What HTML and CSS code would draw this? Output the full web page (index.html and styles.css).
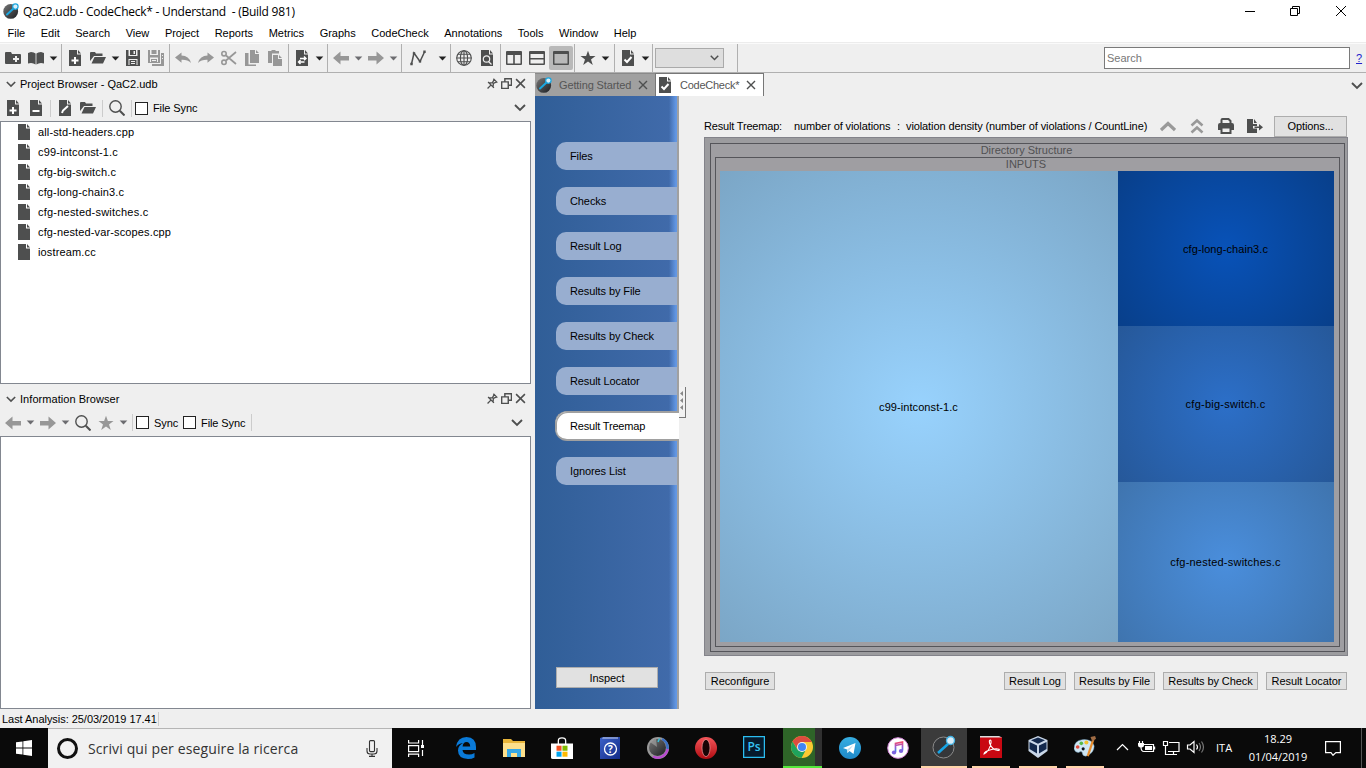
FILE: index.html
```html
<!DOCTYPE html>
<html lang="en">
<head>
<meta charset="utf-8">
<title>QaC2.udb - CodeCheck* - Understand</title>
<link rel="stylesheet" href="styles.css">
</head>
<body>
<svg class="defs" width="0" height="0">
  <defs>
    <linearGradient id="ball" x1="0" y1="0" x2="1" y2="1"><stop offset="0" stop-color="#777"/><stop offset="1" stop-color="#1c1e22"/></linearGradient>
    <linearGradient id="note" x1="0" y1="0" x2="0" y2="1"><stop offset="0" stop-color="#f0486c"/><stop offset=".5" stop-color="#9a5bd6"/><stop offset="1" stop-color="#2c8ce8"/></linearGradient>
    <linearGradient id="red" x1="0" y1="0" x2="0" y2="1"><stop offset="0" stop-color="#f5565a"/><stop offset="1" stop-color="#b00c12"/></linearGradient>
    <linearGradient id="book" x1="0" y1="0" x2="1" y2="1"><stop offset="0" stop-color="#3c62c8"/><stop offset="1" stop-color="#122a88"/></linearGradient>
    <linearGradient id="tele" x1="0" y1="0" x2="0" y2="1"><stop offset="0" stop-color="#37aee2"/><stop offset="1" stop-color="#1e88c8"/></linearGradient>
  </defs>
  <symbol id="i-app" viewBox="0 0 16 16"><circle cx="7.7" cy="8.4" r="7.4" fill="url(#ball)"/><path d="M4 11.5 11 5" stroke="#1ba7e0" stroke-width="2" stroke-linecap="round"/><circle cx="12.4" cy="3.6" r="2.7" fill="#d5eefa" stroke="#1ba7e0" stroke-width="1.2"/></symbol>
  <symbol id="i-folderplus" viewBox="0 0 16 16"><path fill="currentColor" fill-rule="evenodd" d="M0 3q0-1 1-1h5l1 2h8q1 0 1 1v8q0 1-1 1H1q-1 0-1-1zM10 6v2H8v2h2v2h2v-2h2V8h-2V6z"/></symbol>
  <symbol id="i-book" viewBox="0 0 16 16"><path fill="currentColor" d="M0 3 3 2q3 0 4.600 1.500V14.500Q5.500 13 3 13L0 13.500zM16 3l-3-1q-3 0-4.600 1.500V14.500q2-1.500 4.600-1.500l3 .5z"/></symbol>
  <symbol id="i-caret" viewBox="0 0 9 5"><path fill="currentColor" d="M.7.500h7.600L4.500 4.500z"/></symbol>
  <symbol id="i-doc" viewBox="0 0 16 16"><path fill="currentColor" d="M2 0h8v4.500h4V16H2zM11 0l3 3.500h-3z"/></symbol>
  <symbol id="i-docplus" viewBox="0 0 16 16"><use href="#i-doc"/><path stroke="#fff" stroke-width="2" d="M8 7v7M4.500 10.500h7"/></symbol>
  <symbol id="i-docminus" viewBox="0 0 16 16"><use href="#i-doc"/><path stroke="#fff" stroke-width="2" d="M4.500 11h7"/></symbol>
  <symbol id="i-docpen" viewBox="0 0 16 16"><use href="#i-doc"/><path stroke="#fff" stroke-width="2" d="m5 13 1-2.500 5-4.500"/></symbol>
  <symbol id="i-docswap" viewBox="0 0 16 16"><use href="#i-doc"/><path stroke="#fff" stroke-width="1.400" fill="none" d="M6 8.500h5.500M5 12h5.500M10 6.500l2 2-2 1.600M6.500 10 4.500 12l2 2"/></symbol>
  <symbol id="i-doccheck" viewBox="0 0 16 16"><use href="#i-doc"/><path stroke="#fff" stroke-width="2" fill="none" d="m4.500 9.500 2.500 2.500 4.500-5"/></symbol>
  <symbol id="i-docfind" viewBox="0 0 16 16"><use href="#i-doc"/><path stroke="#eee" stroke-width="1.200" fill="none" d="m9.500 11.500 3 3"/><circle cx="7.500" cy="9" r="3.200" fill="none" stroke="#eee" stroke-width="1.200"/></symbol>
  <symbol id="i-open" viewBox="0 0 16 16"><path fill="currentColor" d="M0 11V3q0-1 1-1h4l1 1.500h6.500V6H4zM4.500 7H16l-3 6.500H1.500z"/></symbol>
  <symbol id="i-save" viewBox="0 0 16 16"><path fill="currentColor" fill-rule="evenodd" d="M1 0h2.500v6h9V0H15v16H1zM5 0h6v5H5zM3.500 9v6h1v-5h7v5h1V9zM6 11h4v1H6zm0 2h4v1H6zM8.500 1v3H10V1z"/></symbol>
  <symbol id="i-saveall" viewBox="0 0 16 16"><path fill="currentColor" fill-rule="evenodd" d="M0 0h2v5h8V0h2v13H0zM3.500 0h5v4h-5zM2 7.500V12h1V9h6v3h1V7.500zM4 10h4v1H4z"/><path fill="currentColor" d="M13 3h3v13H4v-2h9zM14 5v1h1V5zM14 8v1h1V8z"/></symbol>
  <symbol id="i-undo" viewBox="0 0 16 16"><path fill="currentColor" d="M0 7.500 6.500 2.500v3Q14 5.500 16 13q-3.500-3.500-9.500-3.200v3z"/></symbol>
  <symbol id="i-redo" viewBox="0 0 16 16"><path fill="currentColor" d="M16 7.500 9.500 2.500v3Q2 5.500 0 13q3.500-3.500 9.500-3.200v3z"/></symbol>
  <symbol id="i-cut" viewBox="0 0 16 16"><path stroke="currentColor" stroke-width="1.700" fill="none" d="M5 5.500 15 14M5 10.500 15 2"/><circle cx="3" cy="3.700" r="2.200" fill="none" stroke="currentColor" stroke-width="1.600"/><circle cx="3" cy="12.300" r="2.200" fill="none" stroke="currentColor" stroke-width="1.600"/></symbol>
  <symbol id="i-copy" viewBox="0 0 16 16"><path fill="currentColor" d="M6 0h5v4h4v9H6zM12 0l3 3h-3zM1 3h3.500v11.500H12V16H1z"/></symbol>
  <symbol id="i-paste" viewBox="0 0 16 16"><path fill="currentColor" d="M1 1h3l1-1h3l1 1h3v2.500H5V13H1zM6 5h5v4h4v7H6zM12 5l3 3h-3z"/></symbol>
  <symbol id="i-left" viewBox="0 0 16 16"><path fill="currentColor" d="M0 8 7.500 1.500V6H16v4.500H7.500v4z"/></symbol>
  <symbol id="i-right" viewBox="0 0 16 16"><path fill="currentColor" d="M16 8 8.500 1.500V6H0v4.500h8.500v4z"/></symbol>
  <symbol id="i-graph" viewBox="0 0 16 16"><path stroke="currentColor" stroke-width="1.500" fill="none" d="M1.500 14 4 3l6 8.500L14.500 2"/><path fill="currentColor" d="M.3 12.700h2.400v2.600H.3zM2.800 2.200h2.400v2.400H2.800zM8.800 10.200h2.400v2.400H8.800zM13.300.500h2.400v2.400h-2.400z"/></symbol>
  <symbol id="i-globe" viewBox="0 0 16 16"><g fill="none" stroke="currentColor" stroke-width="1.100"><circle cx="8" cy="8" r="7.300"/><ellipse cx="8" cy="8" rx="3.600" ry="7.300"/><path d="M8 .5v15M.5 8h15M1.800 4.200h12.400M1.800 11.800h12.400"/></g></symbol>
  <symbol id="i-cols" viewBox="0 0 16 16"><path fill="currentColor" fill-rule="evenodd" d="M1 1h14q1 0 1 1v12q0 1-1 1H1q-1 0-1-1V2q0-1 1-1zM1.500 5v8.500h5.700V5zM8.800 5v8.500h5.700V5z"/></symbol>
  <symbol id="i-rows" viewBox="0 0 16 16"><path fill="currentColor" fill-rule="evenodd" d="M1 1h14q1 0 1 1v12q0 1-1 1H1q-1 0-1-1V2q0-1 1-1zM1.500 4v4h13V4zM1.500 9.500v4h13v-4z"/></symbol>
  <symbol id="i-single" viewBox="0 0 16 16"><path fill="currentColor" fill-rule="evenodd" d="M1 1h14q1 0 1 1v12q0 1-1 1H1q-1 0-1-1V2q0-1 1-1zM1.500 4v9.500h13V4z"/></symbol>
  <symbol id="i-star" viewBox="0 0 16 16"><path fill="currentColor" d="m8 .8 1.900 5.300h5.600l-4.500 3.300 1.800 5.500L8 11.500l-4.800 3.400L5 9.400.5 6.100h5.600z"/></symbol>
  <symbol id="i-find" viewBox="0 0 16 16"><circle cx="6.500" cy="6.500" r="5.700" fill="none" stroke="currentColor" stroke-width="1.400"/><path d="m10.800 10.800 4.700 4.700" stroke="currentColor" stroke-width="2"/></symbol>
  <symbol id="i-chev" viewBox="0 0 12 8"><path d="m1 1 5 5 5-5" fill="none" stroke="currentColor" stroke-width="1.900"/></symbol>
  <symbol id="i-pin" viewBox="0 0 10 10"><path d="M.5 9.500 3.300 6.700M1 3.700 6.300 9M1.800 4.500 5 4.200 6.500 1.300M5.500 8.200 5.800 5 8.700 3.500M5.800.6l3.600 3.600" fill="none" stroke="currentColor" stroke-width="1.200"/></symbol>
  <symbol id="i-float" viewBox="0 0 10 10"><path d="M3.500 3V.600h6v6H7M.6 3.500h6v6h-6z" fill="none" stroke="currentColor" stroke-width="1.300"/></symbol>
  <symbol id="i-x" viewBox="0 0 10 10"><path d="m1 1 8 8M9 1 1 9" fill="none" stroke="currentColor" stroke-width="1.400"/></symbol>
  <symbol id="i-print" viewBox="0 0 16 16"><path fill="none" stroke="currentColor" stroke-width="2" d="M3.500 6V2q0-1 1-1h6l2 2v3M3.500 9.500h9V15h-9z"/><path fill="currentColor" d="M2 5h12q2 0 2 2v5h-3.500V9h-9v3H0V7q0-2 2-2z"/></symbol>
  <symbol id="i-export" viewBox="0 0 16 16"><path fill="currentColor" d="M0 1h6v5h4v2H6v2.500h4V15H0zM7 1l3 4H7zM7.500 8.500H12V6l4 3.300-4 3.200V10H7.500z"/></symbol>
</svg>

<header class="titlebar">
  <svg class="app-icon"><use href="#i-app"/></svg>
  <span class="title">QaC2.udb - CodeCheck* - Understand&nbsp; - (Build 981)</span>
  <svg class="winbtns" viewBox="0 0 104 12"><g fill="none" stroke="#000"><path d="M1 6.500h10M46.500 3.500h7v7h-7zM48.500 3.500v-2h7v7h-2M92 1l10 10M102 1 92 11"/></g></svg>
</header>
<nav class="menubar"><span>File</span><span>Edit</span><span>Search</span><span>View</span><span>Project</span><span>Reports</span><span>Metrics</span><span>Graphs</span><span>CodeCheck</span><span>Annotations</span><span>Tools</span><span>Window</span><span>Help</span></nav>

<div class="toolbar">
  <div class="group g1"><svg><use href="#i-folderplus"/></svg><svg><use href="#i-book"/></svg><svg class="caret"><use href="#i-caret"/></svg></div>
  <div class="group g2"><svg><use href="#i-docplus"/></svg><svg><use href="#i-open"/></svg><svg class="caret"><use href="#i-caret"/></svg><svg><use href="#i-save"/></svg><svg class="off"><use href="#i-saveall"/></svg></div>
  <div class="group g3 off"><svg><use href="#i-undo"/></svg><svg><use href="#i-redo"/></svg><svg><use href="#i-cut"/></svg><svg><use href="#i-copy"/></svg><svg><use href="#i-paste"/></svg></div>
  <div class="group g4"><svg><use href="#i-docswap"/></svg><svg class="caret"><use href="#i-caret"/></svg></div>
  <div class="group g5"><svg class="off"><use href="#i-left"/></svg><svg class="caret dim"><use href="#i-caret"/></svg><svg class="off"><use href="#i-right"/></svg><svg class="caret dim"><use href="#i-caret"/></svg></div>
  <div class="group g6"><svg><use href="#i-graph"/></svg><svg class="caret"><use href="#i-caret"/></svg></div>
  <div class="group g7"><svg><use href="#i-globe"/></svg><svg><use href="#i-docfind"/></svg></div>
  <div class="group g8"><svg><use href="#i-cols"/></svg><svg><use href="#i-rows"/></svg><span class="pressed"><svg><use href="#i-single"/></svg></span></div>
  <div class="group g9"><svg><use href="#i-star"/></svg><svg class="caret"><use href="#i-caret"/></svg></div>
  <div class="group g10"><svg><use href="#i-doccheck"/></svg><svg class="caret"><use href="#i-caret"/></svg></div>
  <div class="group g11"><span class="combo"><svg><use href="#i-chev"/></svg></span></div>
  <div class="search">Search</div><span class="help">?</span>
</div>

<main class="work">
  <aside class="docks">
    <section class="dock project">
      <div class="dock-title"><svg class="fold"><use href="#i-chev"/></svg><span>Project Browser - QaC2.udb</span><svg class="tb first"><use href="#i-pin"/></svg><svg class="tb"><use href="#i-float"/></svg><svg class="tb"><use href="#i-x"/></svg></div>
      <div class="dock-tools"><svg><use href="#i-docplus"/></svg><svg><use href="#i-docminus"/></svg><i></i><svg><use href="#i-docpen"/></svg><svg><use href="#i-open"/></svg><i></i><svg><use href="#i-find"/></svg><i></i><b class="box"></b><span>File Sync</span><svg class="more"><use href="#i-chev"/></svg></div>
      <ul class="pane files">
        <li><svg><use href="#i-doc"/></svg>all-std-headers.cpp</li>
        <li><svg><use href="#i-doc"/></svg>c99-intconst-1.c</li>
        <li><svg><use href="#i-doc"/></svg>cfg-big-switch.c</li>
        <li><svg><use href="#i-doc"/></svg>cfg-long-chain3.c</li>
        <li class="wide"><svg><use href="#i-doc"/></svg>cfg-nested-switches.c</li>
        <li><svg><use href="#i-doc"/></svg>cfg-nested-var-scopes.cpp</li>
        <li><svg><use href="#i-doc"/></svg>iostream.cc</li>
      </ul>
    </section>
    <section class="dock info">
      <div class="dock-title"><svg class="fold"><use href="#i-chev"/></svg><span>Information Browser</span><svg class="tb first"><use href="#i-pin"/></svg><svg class="tb"><use href="#i-float"/></svg><svg class="tb"><use href="#i-x"/></svg></div>
      <div class="dock-tools info-tools"><svg class="off"><use href="#i-left"/></svg><svg class="caret dim"><use href="#i-caret"/></svg><svg class="off"><use href="#i-right"/></svg><svg class="caret dim"><use href="#i-caret"/></svg><svg><use href="#i-find"/></svg><svg class="off"><use href="#i-star"/></svg><svg class="caret dim"><use href="#i-caret"/></svg><i></i><b class="box"></b><span>Sync</span><b class="box second"></b><span>File Sync</span><i class="end"></i><svg class="more"><use href="#i-chev"/></svg></div>
      <div class="pane"></div>
    </section>
  </aside>

  <section class="editor">
    <div class="tabs">
      <div class="tab idle"><svg class="ic"><use href="#i-app"/></svg><span>Getting Started</span><svg class="x"><use href="#i-x"/></svg></div>
      <div class="tab current"><svg class="ic"><use href="#i-doccheck"/></svg><span>CodeCheck*</span><svg class="x"><use href="#i-x"/></svg></div>
      <svg class="more"><use href="#i-chev"/></svg>
    </div>
    <div class="content">
      <nav class="side">
        <a>Files</a><a>Checks</a><a>Result Log</a><a>Results by File</a><a>Results by Check</a><a>Result Locator</a><a class="active">Result Treemap</a><a>Ignores List</a>
        <button class="inspect">Inspect</button>
      </nav>
      <svg class="grip" viewBox="0 0 8 31"><path fill="#f2f2f2" d="M0 0h6v30H0z"/><path stroke="#777" d="M0 30.500h7M6.500 0v31" fill="none"/><path fill="#888" d="M4 4v5L1 6.500zM4 11v5l-3-2.500zM4 18v5l-3-2.500z"/></svg>
      <div class="report">
        <div class="report-head">
          <span class="h1">Result Treemap:</span><span class="h2">number of violations</span><span class="h3">:</span><span class="h4">violation density (number of violations / CountLine)</span>
          <svg class="up" viewBox="0 0 16 16"><path d="m1 12 7-6.500 7 6.500" fill="none" stroke="#999" stroke-width="3.200"/></svg>
          <svg class="upup" viewBox="0 0 16 16"><path d="m2.500 7.500 5.500-5 5.500 5M2.500 14.500l5.500-5 5.500 5" fill="none" stroke="#999" stroke-width="2.600"/></svg>
          <svg><use href="#i-print"/></svg><svg class="exp"><use href="#i-export"/></svg>
          <button class="options">Options...</button>
        </div>
        <div class="map">
          <div class="level dir"><div class="cap">Directory Structure</div>
            <div class="level inputs"><div class="cap">INPUTS</div>
              <div class="cells"><div class="cell c1">c99-intconst-1.c</div><div class="cell c2">cfg-long-chain3.c</div><div class="cell c3">cfg-big-switch.c</div><div class="cell c4 wide">cfg-nested-switches.c</div></div>
            </div>
          </div>
        </div>
        <div class="report-foot"><button class="b1">Reconfigure</button><button class="b2">Result Log</button><button class="b3">Results by File</button><button class="b4">Results by Check</button><button class="b5">Result Locator</button></div>
      </div>
    </div>
  </section>
</main>
<footer class="status"><span>Last Analysis: 25/03/2019 17.41</span></footer>

<div class="taskbar">
  <div class="start"><svg viewBox="0 0 16 16"><path fill="#fff" d="M0 2.300 6.500 1.400v6.200H0zM7.300 1.200 16 0v7.600H7.300zM0 8.400h6.500v6.200L0 13.700zM7.300 8.400H16V16l-8.700-1.200z"/></svg></div>
  <div class="cortana"><span class="ring"></span><span class="ask">Scrivi qui per eseguire la ricerca</span><svg class="mic" viewBox="0 0 12 17"><g fill="none" stroke="#333" stroke-width="1.100"><rect x="3.500" y=".6" width="5" height="11" rx="1"/><path d="M1 8v3q0 3 3 3h4q3 0 3-3V8M6 14v2.500M3 16.400h6"/></g></svg></div>
  <div class="app view"><svg viewBox="0 0 22 22"><path fill="none" stroke="#fff" stroke-width="1.200" d="M3.600 3v3h10V3M3.600 8.600h10v6h-10zM3.600 20v-2.800h10V20M17.500 3v5M17.500 13v6"/><path fill="#fff" d="M16 8h3v3h-3z"/></svg></div>
  <div class="app"><svg viewBox="0 0 22 22"><path fill="#0a7ad8" d="M1 10Q2.500 0 11.500 0 21 .5 21 10v3H7.500q.5 4.500 6.500 4.500 3 0 5.500-1.500v4.500Q17 22 13 22 3 21.500 3 13.500 3 8.500 8 6 3.500 6.500 1 10zM7.600 9.500h7.600Q15 5 11.500 5 8 5 7.600 9.500z"/></svg></div>
  <div class="app"><svg viewBox="0 0 22 22"><path fill="#e8b53a" d="M0 2h8l2 2h12v15H0z"/><path fill="#fde08c" d="M0 6h22v14H0z"/><path fill="#35a8e8" d="M4 12h14v8h-4v-4H8v4H4z"/></svg></div>
  <div class="app"><svg viewBox="0 0 24 24"><path d="M8 8V4q0-3 4-3t4 3v4" fill="none" stroke="#fff" stroke-width="1.400"/><path fill="#fff" d="M0 7h24v17H2q-2 0-2-2z"/><path fill="#f25022" d="M6 9.500h5.500V15H6z"/><path fill="#7fba00" d="M12.500 9.500H18V15h-5.500z"/><path fill="#00a4ef" d="M6 16h5.500v5.500H6z"/><path fill="#ffb900" d="M12.500 16H18v5.500h-5.500z"/></svg></div>
  <div class="app"><svg viewBox="0 0 22 22"><path fill="url(#book)" d="M1 1 4 0h17v22H1z"/><path fill="#c9d4ee" d="m3 1.500 1-1h15v1z"/><circle cx="11.500" cy="12" r="6" fill="none" stroke="#fff" stroke-width="1.300"/><text x="11.500" y="15.600" class="q">?</text></svg></div>
  <div class="app"><svg viewBox="0 0 22 22"><circle cx="11" cy="11" r="11" fill="#999"/><path d="M15 2a10 10 0 0 1 5.500 10" stroke="#3a6fc4" stroke-width="2.500" fill="none"/><path d="M20.500 12A10 10 0 0 1 6 19.500" stroke="#b94bd0" stroke-width="2.500" fill="none"/><circle cx="10.500" cy="10.500" r="8.500" fill="url(#ball)"/><path d="M10 10 3 5a9 9 0 0 1 6-3z" fill="#aaa" opacity=".6"/><path d="m11 5 1.500-3.500" stroke="#32c4dc" stroke-width="1.500"/></svg></div>
  <div class="app"><svg viewBox="0 0 22 22"><circle cx="11" cy="11" r="11" fill="url(#red)"/><ellipse cx="11" cy="11" rx="4" ry="8.600" fill="#190405" stroke="#ef9a9a" stroke-width=".7"/></svg></div>
  <div class="app ps-app"><svg viewBox="0 0 22 22"><rect x=".6" y=".6" width="20.800" height="20.800" fill="#061a2c" stroke="#2bbdf0" stroke-width="1.300"/><text x="11" y="15.300" class="ps">Ps</text></svg></div>
  <div class="app chrome"><span><svg viewBox="0 0 22 22"><circle cx="11" cy="11" r="11" fill="#fbc932"/><path fill="#dc4c3f" d="M1.500 5.500A11 11 0 0 1 20.500 5.500L21 6H11l-4.500 7z"/><path fill="#1fa25c" d="M1.500 5.500 6.500 13.500l8 1L10.500 22A11 11 0 0 1 1.500 5.500z"/><circle cx="11" cy="11" r="5" fill="#f1f1f1"/><circle cx="11" cy="11" r="4" fill="#4285f4"/></svg></span></div>
  <div class="app"><svg viewBox="0 0 22 22"><circle cx="11" cy="11" r="11" fill="url(#tele)"/><path fill="#fff" d="m4 11 12.500-5-2 11-4-3-2 2-.5-3.500z"/><path fill="#bcdff2" d="m8 12.500 6.500-4.500-4.500 5.500-1.500 2.500z"/></svg></div>
  <div class="app"><svg viewBox="0 0 22 22"><circle cx="11" cy="11" r="10.300" fill="#fff" stroke="#d78bdc" stroke-width="1"/><path d="M8.500 15V6.500l7-1.500v8.500M8.500 8.500l7-1.500" fill="none" stroke="url(#note)" stroke-width="1.700"/><ellipse cx="7" cy="15.500" rx="2.200" ry="1.900" fill="#7c63e0"/><ellipse cx="14" cy="14" rx="2.200" ry="1.900" fill="#7c63e0"/></svg></div>
  <div class="app und"><svg viewBox="0 0 24 24"><circle cx="11.500" cy="12.500" r="10.500" fill="#35373a" stroke="#8a8a8a"/><path d="m6 18 10-9" stroke="#16a5e6" stroke-width="2.600"/><circle cx="18.500" cy="5.500" r="4" fill="#d7ecf8" stroke="#3fb2e4" stroke-width="1.300"/></svg></div>
  <div class="app run"><span><svg viewBox="0 0 22 22"><path fill="#c90812" d="M0 1h22v21H0z"/><path fill="#ddd" d="M0 0h19l3 1.500H0z"/><path d="M4 18q5-2 7-11 .3-3-.8-3-1.300.2-.6 3 2 6.500 8.400 7.500 2-.2 1-1.300-4-1.700-13 2.300Q4 17 4 18z" fill="none" stroke="#fff" stroke-width="1.100"/></svg></span></div>
  <div class="app run"><span><svg viewBox="0 0 22 22"><path fill="#c9d7e8" d="m11 0 9.500 4v11L11 22l-9.500-7V4z"/><path fill="#13294d" d="m11 1.500 7 2.700-7 3.500-7-3.500zM2.500 6l7.500 3.500v8L2.500 13zM19.500 6 12 9.500v8l7.500-4.500z"/></svg></span></div>
  <div class="app run"><span><svg viewBox="0 0 24 24"><path fill="#cfe6f4" stroke="#7aa9c8" stroke-width=".5" d="M0 14Q0 5 9 4q11-1 13 7 0 8-9 11-4 0-4-4-1-2-4 0-4 0-5-4z"/><circle cx="4" cy="12" r="2" fill="#e04b3c"/><circle cx="8" cy="8" r="2" fill="#55b848"/><circle cx="13.500" cy="7" r="2.200" fill="#f2c12e"/><circle cx="10" cy="14" r="1.700" fill="#10131a"/><path d="m15 22 6-18" stroke="#e88d2c" stroke-width="2.400"/><path fill="#a06c44" d="m18 1 5-1 1 3-4 3z"/></svg></span></div>
  <svg class="tray" viewBox="0 0 90 20"><g fill="none" stroke="#fff" stroke-width="1.200"><path d="m1 13 5.500-5.500L12 13M28 7.500h9.500v7H27M23.500 4v2M26.500 4v2M25 10q0 4.500 3 4.500M47.500 4.500h4v4h-4zM53 5.500h10v9H52M57.500 14.500V17M53 17.500h8M49.500 9v8.500H53M71.500 8v4h2.500l4 3.500v-11L74 8zM80.500 7.500q2 2.500 0 5"/><path d="M83 6q3 4 0 8M85.500 4.500q4 5.500 0 11" stroke="#777"/></g><path fill="#fff" d="M29 9h7v4h-7zM22 6h6v2q0 2.500-3 2.500T22 8zM38 9.500h1.200v3H38z"/></svg>
  <span class="lang">ITA</span>
  <div class="clock"><span>18.29</span><span>01/04/2019</span></div>
  <svg class="notif" viewBox="0 0 16 16"><path d="M.6 1.600h14.800v11h-4.500L8 15.300l-2-2.700H.6z" fill="none" stroke="#fff" stroke-width="1.200"/></svg>
  <span class="peek"></span>
</div>
</body>
</html>
```
FILE: styles.css
```css
* { box-sizing: border-box; }
body { margin: 0; width: 1366px; height: 768px; overflow: hidden; display: flex; flex-direction: column; background: #efefef; color: #000; font: 11px/14px "Liberation Sans", Arial, sans-serif; }
svg { display: block; flex: none; width: 16px; height: 16px; fill: none; color: #4e4f4f; }
.defs { position: absolute; width: 0; height: 0; }
.off, .off svg { color: #979797; }
button { font: inherit; letter-spacing: inherit; padding: 0; border: 1px solid #adadad; background: #e1e1e1; color: #000; }

.titlebar { height: 24px; background: #fff; display: flex; align-items: center; padding-left: 3px; }
.app-icon { width: 16px; height: 16px; margin-top: -2px; }
.title { font: 12px/24px "Open Sans", "Noto Sans", sans-serif; letter-spacing: -.25px; margin-left: 4px; white-space: nowrap; }
.winbtns { width: 104px; height: 12px; margin: -2px 18px 0 auto; }
.menubar { height: 20px; background: #fff; border-bottom: 1px solid #fafafa; box-shadow: inset 0 -1px #ececec; display: flex; gap: 15.6px; padding: 2px 0 0 7.500px; letter-spacing: -.01px; }

.toolbar { height: 29px; display: flex; border-bottom: 1px solid #b0b0b0; flex: none; }
.group { display: flex; align-items: center; gap: 7px; padding-left: 5px; border-right: 1px solid #b0b0b0; }
.caret { width: 9px; height: 5px; margin: 0 -2px; color: #222; }
.dim { color: #6c6c70; }
.g1 { width: 62px; } .g2 { width: 108px; } .g3 { width: 119px; } .g4 { width: 39px; } .g5 { width: 74px; }
.g6 { width: 49px; padding-left: 8px; } .g6 .caret { margin-left: 5px; }
.g7 { width: 50px; } .g8 { width: 74px; } .g9 { width: 40px; } .g10 { width: 38px; } .g11 { width: 85px; padding-left: 2px; }
.pressed { width: 24px; height: 24px; background: #b9b9b9; border-radius: 2px; padding: 4px; margin-left: -3px; }
.combo { width: 69px; height: 20px; border: 1px solid #aaa; background: #dedede; display: flex; align-items: center; justify-content: flex-end; padding-right: 4px; }
.combo svg { width: 9px; height: 6px; }
.search { width: 246px; height: 22px; margin: 3px 0 0 366px; border: 1px solid #7a7a7a; background: #fff; color: #777; padding: 3px 2px; }
.help { color: #2222cc; text-decoration: underline; margin: 7px 0 0 6px; }

.work { height: 636px; display: flex; flex: none; }
.docks { width: 535px; }
.dock-title { height: 22px; display: flex; align-items: center; padding: 0 5px 0 6px; }
.dock-title .fold { width: 10px; height: 7px; margin-right: 4px; }
.tb { width: 11px; height: 11px; margin-left: 3px; margin-top: -1px; }
.tb.first { margin-left: auto; }
.docks .dock-title { width: 531px; }
.dock-tools { height: 26px; width: 531px; display: flex; align-items: center; padding-left: 5px; gap: 7px; }
.dock-tools i { width: 1px; height: 17px; background: #ccc; margin: 0 -1px; }
.box { width: 13px; height: 13px; border: 1px solid #222; background: #fff; }
.project .box { margin-left: -3px; }
.dock-tools span { margin-left: -2px; letter-spacing: -.1px; }
.more { width: 12px; height: 8px; }
.dock-tools .more { margin: 0 5px 0 auto; }
.pane { margin: 0; width: 531px; border: 1px solid #828790; background: #fff; }
.files { list-style: none; padding: 0 0 0 15px; height: 263px; letter-spacing: .14px; }
.files li { height: 20px; display: flex; align-items: center; gap: 6px; }
.wide { letter-spacing: .22px; }
.info { padding-top: 4px; }
.info .dock-title { height: 22px; letter-spacing: .05px; }
.info .dock-tools { height: 26px; padding-bottom: 1px; }
.info .pane { height: 273px; }
.info-tools .box { margin-left: -3px; }
.info-tools .box.second { margin-left: -2px; }
.info-tools .end { margin-left: -1px; }
.info-tools .more { margin-right: 8px; }
.project { height: 311px; }

.editor { width: 831px; display: flex; flex-direction: column; }
.tabs { height: 23px; display: flex; align-items: center; flex: none; }
.tab { height: 23px; display: flex; align-items: center; border-top: 1px solid #8a8a8a; color: #555; }
.idle { width: 120px; background: #a0a0a0; padding-left: 1px; letter-spacing: -.12px; }
.idle span, .current span { margin: 0 7px; }
.current { width: 109px; background: #fff; border: 1px solid #777; border-bottom: 0; padding-left: 1px; letter-spacing: -.25px; }
.tab .x { width: 10px; height: 10px; }
.tabs .more { margin: 3px 3px 0 auto; }
.content { flex: 1; display: flex; }
.side { width: 144px; border-right: 2px solid #a0a0a0; background: linear-gradient(90deg, transparent 134px, #6297e4 141px), linear-gradient(90deg, #305e97, #416bab); padding: 46px 0 0 21px; display: flex; flex-direction: column; gap: 17px; letter-spacing: -.1px; }
.side a { height: 28px; flex: none; line-height: 28px; padding-left: 14px; background: #98aed0; border-radius: 10px 0 0 10px; }
.side .active { height: 30px; line-height: 28px; margin: -1px -2px -1px -1px; background: #fff; border: 1px solid #a0a0a0; border-width: 1px 0 2px 1px; box-shadow: inset 1px 1px #a0a0a0; border-radius: 12px 0 0 12px; letter-spacing: -.18px; }
.inspect { width: 102px; height: 21px; margin: auto 0 21px; flex: none; }
.grip { width: 8px; height: 31px; margin: 291px 0 0 0; }
.report { width: 661px; margin-left: 17px; display: flex; flex-direction: column; }
.report-head { height: 41px; padding-top: 19px; display: flex; align-items: center; white-space: nowrap; letter-spacing: -.1px; }
.h1 { width: 78px; letter-spacing: -.18px; } .h2 { margin-left: 12px; width: 97px; } .h3 { margin-left: 6px; width: 3px; } .h4 { margin-left: 6px; width: 243px; }
.up { margin-left: 11px; } .upup { margin: 0 13px; } .exp { margin-left: 13px; }
.options { width: 73px; height: 21px; margin-left: auto; margin-right: 18px; }
.map { width: 644px; height: 519px; background: #9c9c9f; border: 1px solid #83838a; padding: 5px 3px 3px 5px; display: flex; flex: none; }
.level { flex: 1; border: 1px solid #55555a; background: #9f9ea2; display: flex; flex-direction: column; }
.dir { padding: 0 4px 4px 4px; }
.inputs { padding: 0 5px 4px 4px; }
.cap { height: 13px; line-height: 12px; padding-right: 2px; text-align: center; color: #515153; }
.cells { flex: 1; display: grid; grid-template-columns: 398px 216px; grid-template-rows: 155px 156px 160px; }
.cell { display: flex; align-items: center; justify-content: center; padding-right: 1px; letter-spacing: .07px; }
.cell.c3 { letter-spacing: .25px; }
.cell.wide { letter-spacing: .22px; }
.c1 { grid-row: 1 / 4; background: radial-gradient(circle farthest-corner, #98d2fd, #7ba6c6); }
.c2 { background: radial-gradient(circle farthest-corner, #0852b8, #083f8a); }
.c3 { background: radial-gradient(circle farthest-corner, #2c6fc8, #265899); }
.c4 { background: radial-gradient(circle farthest-corner, #4a8edc, #3f74ae); }
.report-foot { padding-top: 16px; display: flex; letter-spacing: -.08px; }
.report-foot button { height: 18px; margin-right: 8px; white-space: nowrap; }
.report-foot .b1 { width: 70px; margin: 0 229px 0 1px; }
.b2 { width: 62px; } .b3 { width: 81px; } .b4 { width: 95px; } .b5 { width: 81px; }
.status { height: 19px; padding: 3px 0 0 2px; flex: none; letter-spacing: -.04px; }
.status span { border-right: 1px solid #ccc; padding-right: 1px; display: inline-block; }

.taskbar { height: 40px; background: #0a0a0a; display: flex; flex: none; color: #fff; font-family: "Open Sans", "Noto Sans", sans-serif; }
.start { width: 48px; padding: 12px 16px; }
.cortana { width: 344px; background: #f1f1f1; border-top: 1px solid #b5b5b5; display: flex; align-items: center; padding-left: 9px; color: #333; }
.ring { width: 21px; height: 21px; border: 3px solid #111; border-radius: 50%; }
.ask { font-size: 14px; letter-spacing: .12px; margin-left: 10px; white-space: nowrap; }
.mic { width: 12px; height: 17px; margin: 0 14px 0 auto; }
.app { width: 48px; flex: none; display: flex; align-items: center; justify-content: center; }
.app svg { width: 22px; height: 22px; }
.view { margin-right: 2px; }
.ps-app { padding-bottom: 2px; }
.q { font: bold 10px "Open Sans", sans-serif; fill: #fff; text-anchor: middle; }
.ps { font: 600 12px "Open Sans", sans-serif; fill: #35c4f4; text-anchor: middle; }
.chrome span { width: 39px; height: 40px; margin-right: -1px; background: linear-gradient(90deg, #2e6428 32px, #303030 32px); border-bottom: 2px solid #55e83c; display: flex; align-items: center; padding-left: 8px; }
.und { width: 46px; margin-left: -1px; background: #3b3b3b; border-bottom: 2px solid #ffd5aa; }
.und svg { width: 24px; height: 24px; }
.run { width: 47px; }
.run span { width: 38px; height: 40px; border-bottom: 2px solid #ffd5aa; display: flex; align-items: center; justify-content: center; }
.tray { width: 90px; height: 20px; margin: 9px 0 0 8px; }
.lang { font-size: 11px; line-height: 40px; margin-left: 10px; width: 17px; }
.clock { width: 64px; margin-left: 13px; display: flex; flex-direction: column; text-align: center; font-size: 11px; line-height: 18px; padding-top: 2px; }
.notif { margin: 12px 0 0 15px; }
.peek { width: 1px; background: #555; margin-left: auto; margin-right: 4px; }
```
